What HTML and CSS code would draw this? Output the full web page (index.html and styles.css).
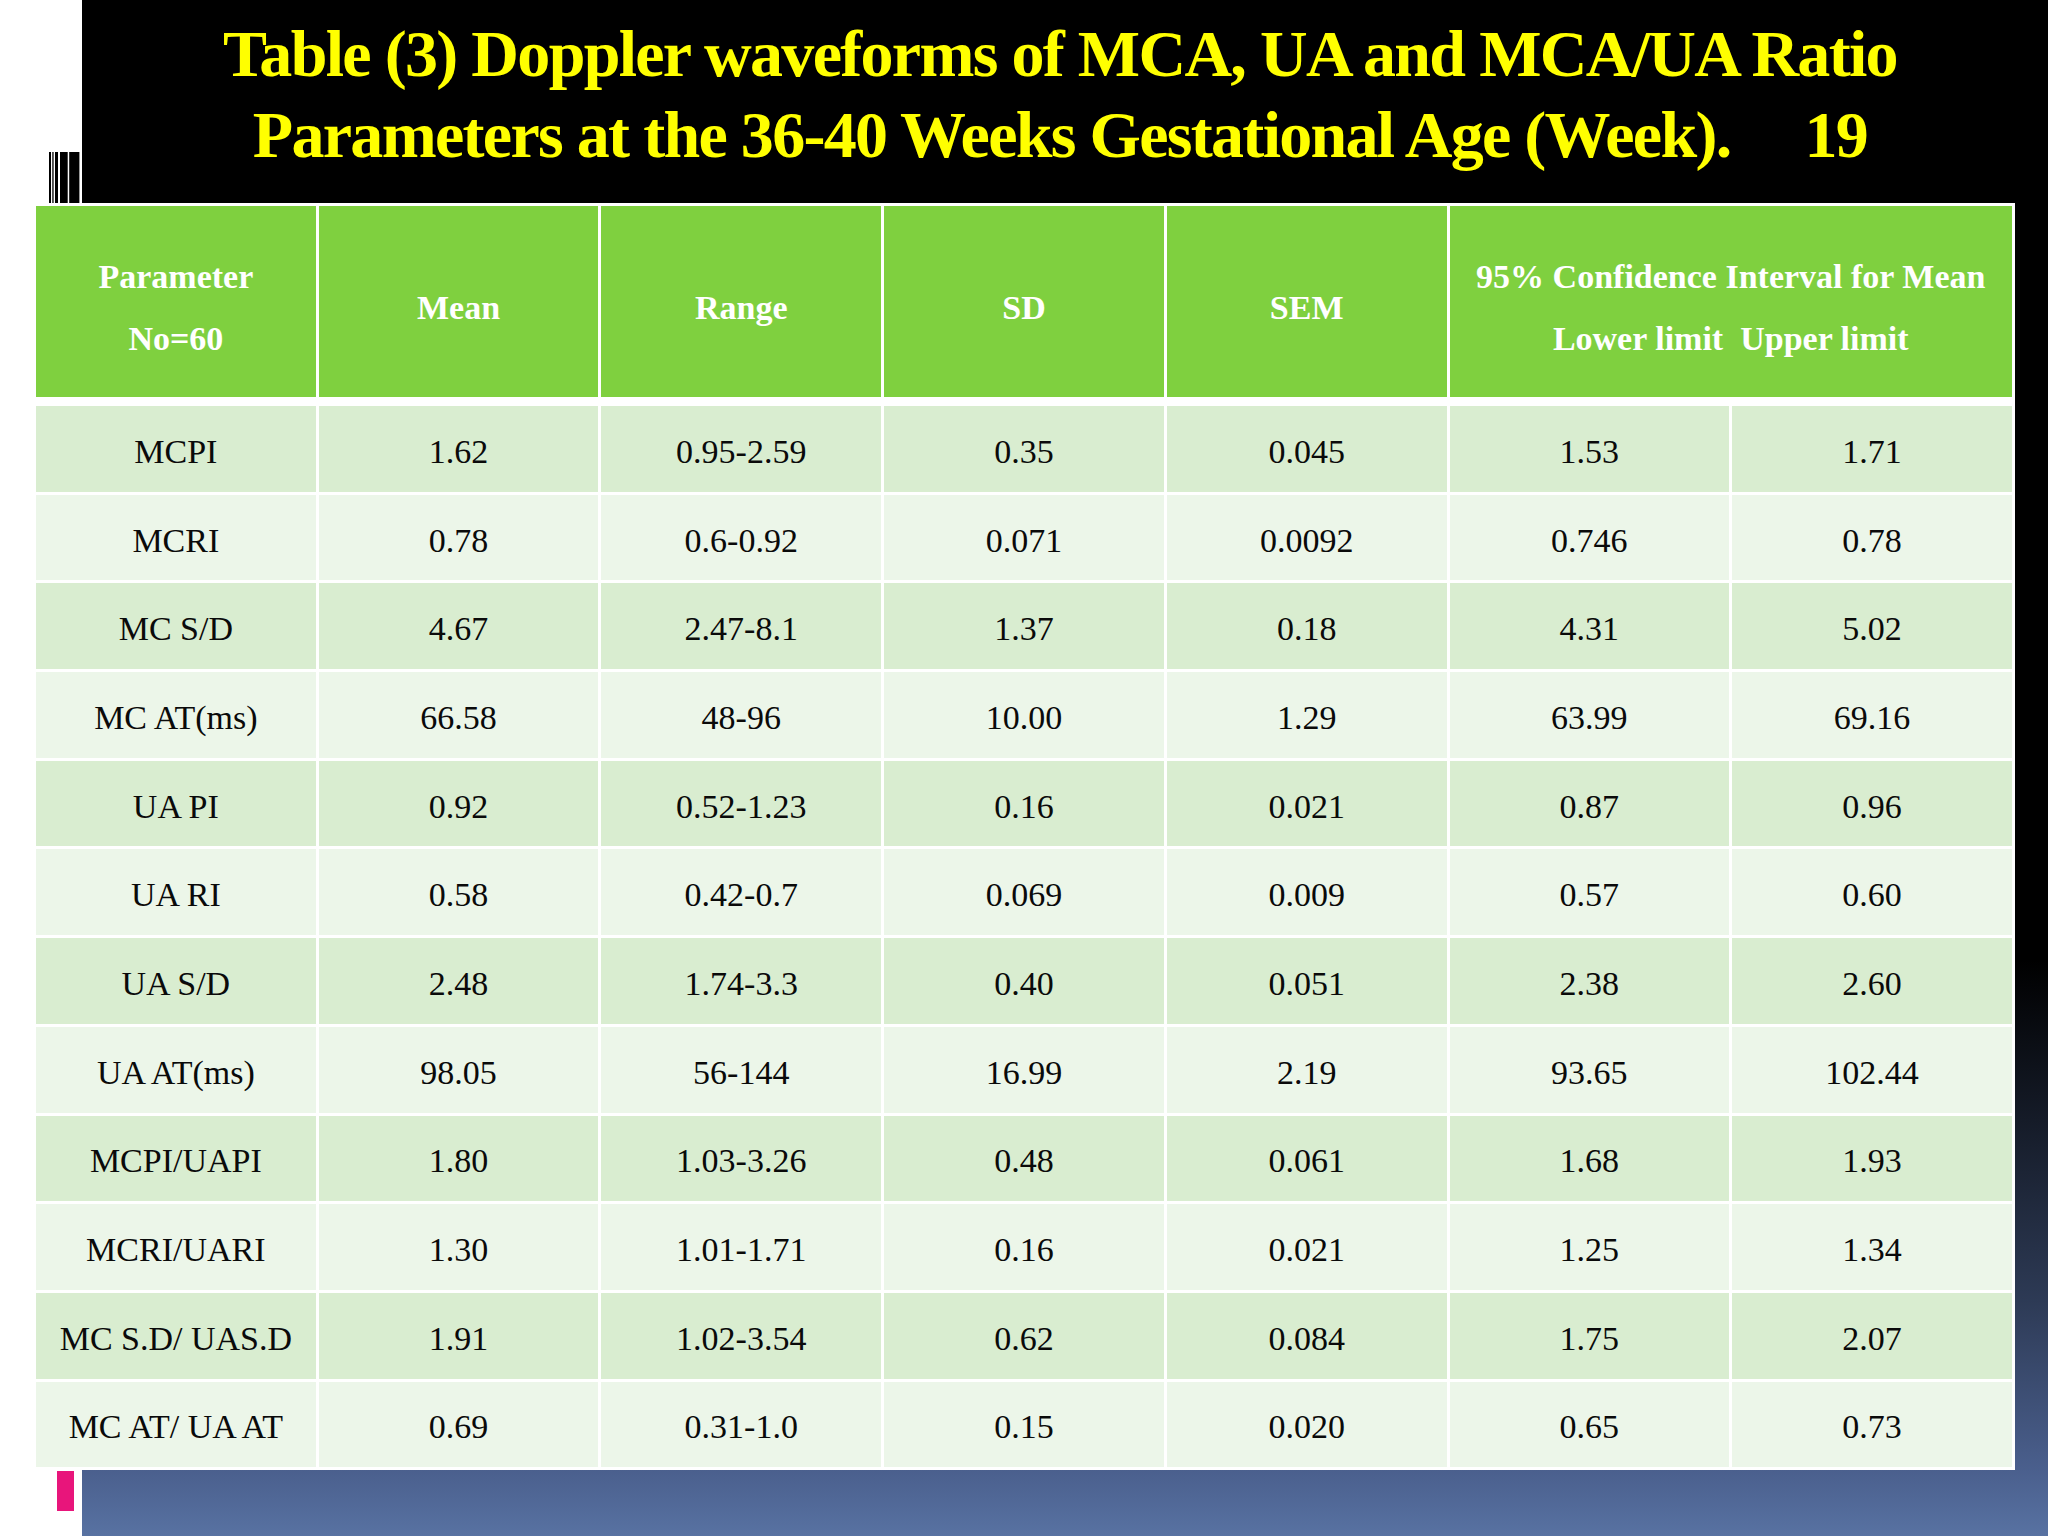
FILE: index.html
```html
<!DOCTYPE html>
<html lang="en">
<head>
<meta charset="utf-8">
<title>Table (3) Doppler waveforms</title>
<link rel="stylesheet" href="styles.css">
</head>
<body>
<div class="slide">
  <header class="title-bar">
    <div class="mark">
      <svg width="82" height="51" viewBox="0 0 82 51" aria-hidden="true">
        <rect x="49" y="0" width="2" height="51" fill="#000"/>
        <rect x="52.3" y="0" width="1.3" height="51" fill="#000"/>
        <rect x="55" y="0" width="3" height="51" fill="#000"/>
        <rect x="60" y="0" width="7.7" height="51" fill="#000"/>
        <rect x="69.2" y="0" width="10.2" height="51" fill="#000"/>
      </svg>
    </div>
    <h1 class="title">Table (3) Doppler waveforms of MCA, UA and MCA/UA Ratio<br>Parameters at the 36-40 Weeks Gestational Age (Week).<span class="gap"></span>19</h1>
  </header>

  <table class="data">
    <thead>
      <tr class="head">
        <th>Parameter<br>No=60</th>
        <th>Mean</th>
        <th>Range</th>
        <th>SD</th>
        <th>SEM</th>
        <th colspan="2">95% Confidence Interval for Mean<br>Lower limit&nbsp; Upper limit</th>
      </tr>
    </thead>
    <tbody>
      <tr><td>MCPI</td><td>1.62</td><td>0.95-2.59</td><td>0.35</td><td>0.045</td><td>1.53</td><td>1.71</td></tr>
      <tr><td>MCRI</td><td>0.78</td><td>0.6-0.92</td><td>0.071</td><td>0.0092</td><td>0.746</td><td>0.78</td></tr>
      <tr><td>MC S/D</td><td>4.67</td><td>2.47-8.1</td><td>1.37</td><td>0.18</td><td>4.31</td><td>5.02</td></tr>
      <tr><td>MC AT(ms)</td><td>66.58</td><td>48-96</td><td>10.00</td><td>1.29</td><td>63.99</td><td>69.16</td></tr>
      <tr><td>UA PI</td><td>0.92</td><td>0.52-1.23</td><td>0.16</td><td>0.021</td><td>0.87</td><td>0.96</td></tr>
      <tr><td>UA RI</td><td>0.58</td><td>0.42-0.7</td><td>0.069</td><td>0.009</td><td>0.57</td><td>0.60</td></tr>
      <tr><td>UA S/D</td><td>2.48</td><td>1.74-3.3</td><td>0.40</td><td>0.051</td><td>2.38</td><td>2.60</td></tr>
      <tr><td>UA AT(ms)</td><td>98.05</td><td>56-144</td><td>16.99</td><td>2.19</td><td>93.65</td><td>102.44</td></tr>
      <tr><td>MCPI/UAPI</td><td>1.80</td><td>1.03-3.26</td><td>0.48</td><td>0.061</td><td>1.68</td><td>1.93</td></tr>
      <tr><td>MCRI/UARI</td><td>1.30</td><td>1.01-1.71</td><td>0.16</td><td>0.021</td><td>1.25</td><td>1.34</td></tr>
      <tr><td>MC S.D/ UAS.D</td><td>1.91</td><td>1.02-3.54</td><td>0.62</td><td>0.084</td><td>1.75</td><td>2.07</td></tr>
      <tr><td>MC AT/ UA AT</td><td>0.69</td><td>0.31-1.0</td><td>0.15</td><td>0.020</td><td>0.65</td><td>0.73</td></tr>
    </tbody>
  </table>

  <div class="foot"><span class="pink"></span></div>
</div>
</body>
</html>
```

FILE: styles.css
```css
html, body {
  margin: 0;
  padding: 0;
}

body {
  width: 2048px;
  height: 1536px;
  overflow: hidden;
  font-family: "Liberation Serif", "Times New Roman", serif;
}

.slide {
  width: 2048px;
  height: 1536px;
  background:
    linear-gradient(to right, #ffffff 0, #ffffff 82px, transparent 82px),
    linear-gradient(to bottom,
      #000000 0,
      #000000 960px,
      #151b28 1120px,
      #2d3a55 1300px,
      #4a5f8d 1469px,
      #5872a2 1536px);
}

.title-bar {
  display: flex;
  height: 203px;
}

.mark {
  flex: none;
  width: 82px;
  display: flex;
  align-items: flex-end;
}

.mark svg {
  display: block;
}

.title {
  flex: 1;
  margin: 0;
  padding: 13px 10px 0 0;
  text-align: center;
  color: #ffff00;
  font-size: 66px;
  line-height: 81px;
  font-weight: bold;
  letter-spacing: -1.7px;
  white-space: nowrap;
}

.title .gap {
  display: inline-block;
  width: 74px;
}

.data {
  margin-left: 33px;
  width: 1982px;
  table-layout: fixed;
  border-collapse: separate;
  border-spacing: 3px;
  background: #ffffff;
  font-size: 34px;
  text-align: center;
}

.data th,
.data td {
  box-sizing: border-box;
  padding: 0;
  text-align: center;
  vertical-align: middle;
}

.head {
  height: 197px;
}

.head th {
  background: #7fd03f;
  color: #ffffff;
  font-weight: bold;
  line-height: 62px;
  padding-top: 12px;
  border-bottom: 6px solid #ffffff;
}

.data tbody tr {
  height: 85.7px;
}

.data td {
  color: #0a0a0a;
  padding-top: 6px;
  line-height: 40px;
}

.data tbody tr:nth-child(odd) td {
  background: #d9edd0;
}

.data tbody tr:nth-child(even) td {
  background: #ecf6e9;
}

.foot {
  padding: 1px 0 0 57px;
}

.pink {
  display: block;
  width: 17px;
  height: 40px;
  background: #e8157b;
}
```
